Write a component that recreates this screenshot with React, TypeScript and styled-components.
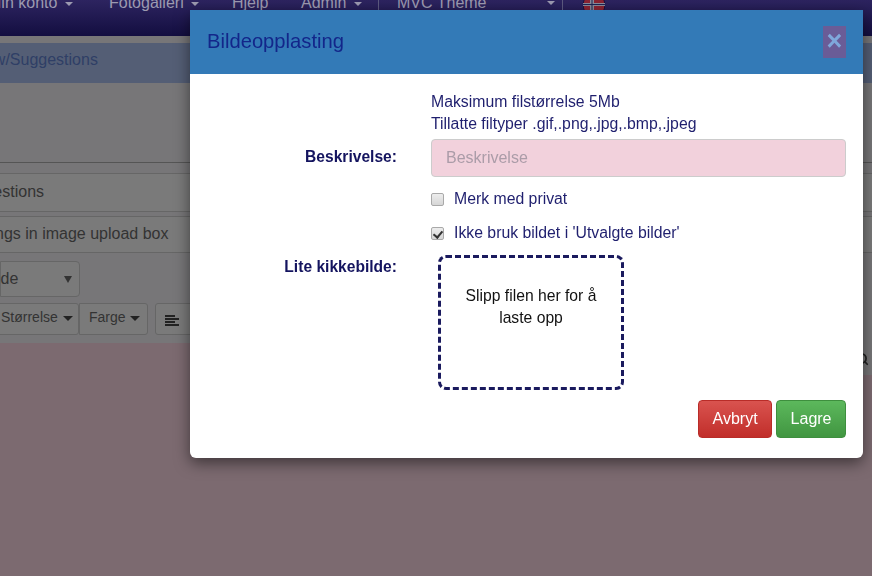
import React from "react";
import styled, {createGlobalStyle} from "styled-components";
import {Search} from "lucide-react";

const GlobalStyle = createGlobalStyle`
  html, body {
    margin: 0;
    padding: 0;
    height: 100%;
    overflow: hidden;
    background: #7c6a70;
    font-family: "Liberation Sans", Arial, sans-serif;
  }
  * {
    box-sizing: border-box;
  }
`

const App: React.FC = () => {
    return (
        <>
            <GlobalStyle/>
            <Page>
                <NavBar>
                    <NavItem $width={121} $left={-12}>Min konto <Caret/></NavItem>
                    <NavItem $width={123}>Fotogalleri <Caret/></NavItem>
                    <NavItem $width={69}>Hjelp</NavItem>
                    <NavItem $width={77}>Admin <Caret/></NavItem>
                    <NavDivider/>
                    <NavItem $width={165}>MVC Theme</NavItem>
                    <NavCaret/>
                    <NavDivider/>
                    <Flag viewBox="0 0 22 22">
                        <circle cx="11" cy="5" r="11" fill="#8b2433" stroke="#17123f" strokeWidth="1"/>
                        <rect x="0" y="3" width="22" height="3" fill="#8a8a9a"/>
                        <rect x="7" y="-6" width="4" height="22" fill="#8a8a9a"/>
                        <rect x="0" y="4" width="22" height="1" fill="#1d2455"/>
                        <rect x="8.5" y="-6" width="1" height="22" fill="#1d2455"/>
                    </Flag>
                </NavBar>
                <Content>
                    <Breadcrumb>View/Suggestions</Breadcrumb>
                    <Divider/>
                    <Row $top={10} $height={39}><RowText $left={-44}>Suggestions</RowText></Row>
                    <Row $top={4} $height={37}><RowText $left={-37}>Settings in image upload box</RowText></Row>
                    <Toolbar>
                        <FontSelect><SelectText>Velg kode</SelectText><SelectCaret/></FontSelect>
                        <ToolRow>
                            <ToolButton $width={88} $left={-9}>Størrelse <ToolCaret/></ToolButton>
                            <ToolButton $width={69}>Farge <ToolCaret/></ToolButton>
                            <AlignButton>
                                <svg width="14" height="11" viewBox="0 0 14 11">
                                    <path d="M0 1h10M0 4h14M0 7h10M0 10h14" stroke="#222" strokeWidth="2"/>
                                </svg>
                            </AlignButton>
                        </ToolRow>
                    </Toolbar>
                </Content>
                <SearchStrip><Search size={14} strokeWidth={3} color="#222"/></SearchStrip>
            </Page>
            <Modal>
                <ModalHeader>
                    <ModalTitle>Bildeopplasting</ModalTitle>
                    <CloseButton>×</CloseButton>
                </ModalHeader>
                <ModalBody>
                    <FormRow $top={0}>
                        <Label/>
                        <Hint>Maksimum filstørrelse 5Mb<br/>Tillatte filtyper .gif,.png,.jpg,.bmp,.jpeg</Hint>
                    </FormRow>
                    <FormRow $top={4}>
                        <Label $pad={7}>Beskrivelse:</Label>
                        <TextInput placeholder="Beskrivelse"/>
                    </FormRow>
                    <FormRow $top={9}>
                        <Label/>
                        <CheckRow><CheckBox type="checkbox"/>Merk med privat</CheckRow>
                    </FormRow>
                    <FormRow $top={8}>
                        <Label/>
                        <CheckRow><CheckBox type="checkbox" defaultChecked/>Ikke bruk bildet i 'Utvalgte bilder'</CheckRow>
                    </FormRow>
                    <FormRow $top={9}>
                        <Label $pad={1}>Lite kikkebilde:</Label>
                        <DropZone>Slipp filen her for å laste opp</DropZone>
                    </FormRow>
                    <Footer>
                        <ActionButton $danger>Avbryt</ActionButton>
                        <ActionButton>Lagre</ActionButton>
                    </Footer>
                </ModalBody>
            </Modal>
        </>
    );
}

export default App

const Page = styled.div`
  height: 576px;
  width: 872px;
  overflow: hidden;
  background: #7c6a70;
`
const NavBar = styled.div`
  height: 36px;
  display: flex;
  background: linear-gradient(#2d2460, #130e40);
`
const NavItem = styled.div<{ $width: number, $left?: number }>`
  flex: none;
  width: ${p => p.$width}px;
  margin-left: ${p => p.$left ?? 0}px;
  margin-top: -8px;
  height: 22px;
  line-height: 22px;
  color: #9c9ab0;
  font-size: 16px;
  white-space: nowrap;
`
const Caret = styled.span`
  display: inline-block;
  border-top: 4px solid #9c9ab0;
  border-left: 4px solid transparent;
  border-right: 4px solid transparent;
  vertical-align: middle;
  margin-left: 3px;
`
const NavCaret = styled(Caret)`
  align-self: flex-start;
  flex: none;
  margin: 1px 7px 0 -15px;
`
const NavDivider = styled.div`
  flex: none;
  width: 1px;
  height: 36px;
  background: #5d5a80;
  margin-right: 18px;
`
const Flag = styled.svg`
  flex: none;
  width: 22px;
  height: 22px;
  margin-left: 2px;
`
const Content = styled.div`
  height: 307px;
  padding-top: 7px;
  background: #777678;
`
const Breadcrumb = styled.div`
  height: 40px;
  padding-top: 6px;
  margin-left: -29px;
  background: #545e75;
  color: #2f3f66;
  font-size: 16px;
  line-height: 22px;
  white-space: nowrap;
`
const Divider = styled.div`
  height: 1px;
  margin-top: 79px;
  background: #555;
`
const Row = styled.div<{ $top: number, $height: number }>`
  height: ${p => p.$height}px;
  margin-top: ${p => p.$top}px;
  background: #7a7a7a;
  border-top: 1px solid #666;
  border-bottom: 1px solid #666;
  color: #333;
  font-size: 16px;
  line-height: ${p => p.$height - 3}px;
  white-space: nowrap;
`
const RowText = styled.span<{ $left: number }>`
  display: block;
  margin-left: ${p => p.$left}px;
`
const Toolbar = styled.div`
  margin-top: 8px;
  display: flex;
  flex-direction: column;
  gap: 6px;
`
const FontSelect = styled.div`
  width: 80px;
  height: 36px;
  display: flex;
  align-items: center;
  justify-content: space-between;
  padding-right: 7px;
  background: #7a7a7a;
  border: 1px solid #666;
  border-radius: 0 4px 4px 0;
  color: #333;
  font-size: 16px;
`
const SelectText = styled.span`
  margin-left: -53px;
  white-space: nowrap;
`
const SelectCaret = styled.span`
  border-top: 7px solid #333;
  border-left: 4px solid transparent;
  border-right: 4px solid transparent;
`
const ToolRow = styled.div`
  display: flex;
`
const ToolButton = styled.div<{ $width: number, $left?: number }>`
  flex: none;
  width: ${p => p.$width}px;
  height: 32px;
  margin-left: ${p => p.$left ?? 0}px;
  padding-left: 9px;
  background: #7a7a7a;
  border: 1px solid #666;
  border-radius: 0 3px 3px 0;
  font-size: 14px;
  line-height: 27px;
  color: #333;
  white-space: nowrap;
`
const ToolCaret = styled(Caret)`
  border-top: 5px solid #222;
  border-left-width: 5px;
  border-right-width: 5px;
  margin-left: 1px;
`
const AlignButton = styled.div`
  flex: none;
  width: 40px;
  height: 32px;
  margin-left: 7px;
  padding: 8px 9px;
  background: #7a7a7a;
  border: 1px solid #666;
  border-radius: 3px;
`
const SearchStrip = styled.div`
  display: flex;
  justify-content: flex-end;
  width: 120px;
  height: 32px;
  margin-left: auto;
  padding: 9px 3px 0 0;
  background: #777678;
`
const Modal = styled.div`
  position: fixed;
  left: 190px;
  top: 10px;
  width: 673px;
  height: 448px;
  background: #fff;
  border-radius: 0 0 6px 6px;
  box-shadow: 0 5px 15px rgba(0, 0, 0, .5);
`
const ModalHeader = styled.div`
  height: 64px;
  background: #337ab7;
  display: flex;
  align-items: center;
  justify-content: space-between;
  padding: 0 17px;
`
const ModalTitle = styled.h4`
  margin: 0;
  padding-bottom: 2px;
  font-size: 20.2px;
  font-weight: normal;
  color: #13268a;
`
const CloseButton = styled.div`
  width: 23px;
  height: 32px;
  background: #6a5c97;
  color: #7fa8db;
  font-size: 27px;
  font-weight: bold;
  text-align: center;
  line-height: 30px;
`
const ModalBody = styled.div`
  padding: 17px 17px 0;
`
const FormRow = styled.div<{ $top: number }>`
  display: flex;
  gap: 34px;
  margin-top: ${p => p.$top}px;
`
const Hint = styled.div`
  color: #1f1f6e;
  font-size: 15.8px;
  line-height: 22px;
`
const Label = styled.label<{ $pad?: number }>`
  flex: none;
  width: 190px;
  padding-top: ${p => p.$pad ?? 0}px;
  color: #14145f;
  font-weight: bold;
  font-size: 15.6px;
  line-height: 22px;
  text-align: right;
`
const TextInput = styled.input`
  flex: 1;
  min-width: 0;
  height: 38px;
  background: #f2d1dc;
  border: 1px solid #ccc;
  border-radius: 4px;
  padding: 0 14px;
  font-size: 16px;
  font-family: inherit;
  &::placeholder { color: #ab9ca8; }
`
const CheckRow = styled.label`
  color: #1f1f6e;
  font-size: 15.8px;
  display: flex;
  align-items: center;
  gap: 10px;
  height: 26px;
`
const CheckBox = styled.input`
  appearance: none;
  flex: none;
  position: relative;
  width: 13px;
  height: 13px;
  margin: 0;
  border: 1px solid #a9a9a9;
  border-radius: 2px;
  background: linear-gradient(#ededed, #d6d6d6);
  &:checked::after {
    content: "";
    position: absolute;
    left: 3px;
    top: 1px;
    width: 4px;
    height: 7px;
    border: solid #333;
    border-width: 0 2px 2px 0;
    transform: rotate(40deg);
  }
`
const DropZone = styled.div`
  flex: none;
  width: 186px;
  height: 135px;
  margin-left: 7px;
  border: 3px dashed #1a1a5e;
  border-radius: 8px;
  padding: 27px 20px;
  text-align: center;
  font-size: 15.7px;
  line-height: 22px;
  color: #111;
`
const Footer = styled.div`
  display: flex;
  justify-content: flex-end;
  gap: 4px;
  margin-top: 10px;
`
const ActionButton = styled.button<{ $danger?: boolean }>`
  height: 38px;
  padding: 0 13.5px;
  font-size: 16px;
  font-family: inherit;
  color: #fff;
  border-radius: 4px;
  border: 1px solid ${p => p.$danger ? "#b92c28" : "#3e8f3e"};
  background: ${p => p.$danger ? "linear-gradient(#d9534f, #c12e2a)" : "linear-gradient(#5cb85c, #419641)"};
`
